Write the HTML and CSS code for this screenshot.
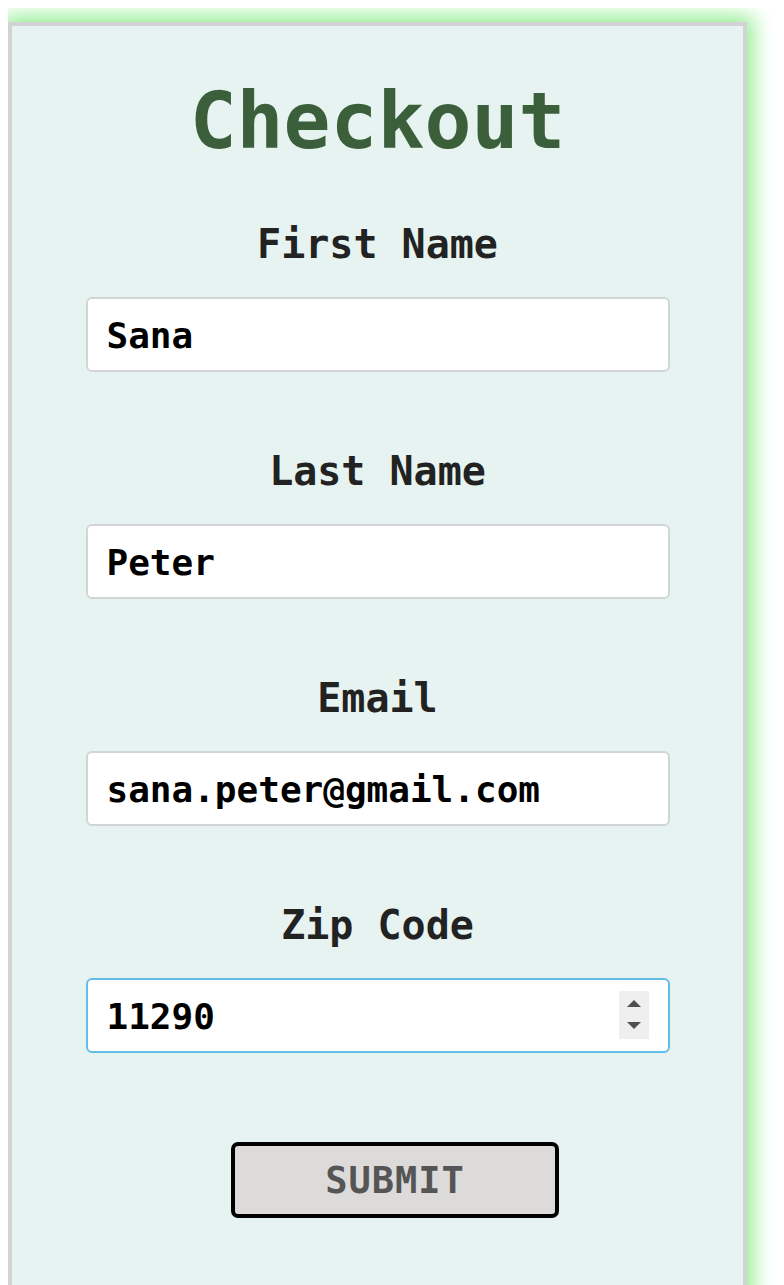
FILE: index.html
```html
<!DOCTYPE html>
<html lang="en">
<head>
<meta charset="utf-8">
<title>Checkout</title>
<link rel="stylesheet" href="styles.css">
</head>
<body>
<div class="card">
  <h1 class="title">Checkout</h1>
  <form class="form">
    <label class="field-label first" for="first">First Name</label>
    <input class="field" id="first" type="text" value="Sana">

    <label class="field-label" for="last">Last Name</label>
    <input class="field" id="last" type="text" value="Peter">

    <label class="field-label" for="email">Email</label>
    <input class="field" id="email" type="text" value="sana.peter@gmail.com">

    <label class="field-label" for="zip">Zip Code</label>
    <div class="field-wrap">
      <input class="field field-focus" id="zip" type="text" value="11290">
      <span class="spinner">
        <svg width="30" height="48" viewBox="0 0 30 48">
          <polygon points="8,16 22,16 15,9" fill="#505050"/>
          <polygon points="8,31 22,31 15,38" fill="#505050"/>
        </svg>
      </span>
    </div>

    <button class="submit" type="button">SUBMIT</button>
  </form>
</div>
</body>
</html>
```

FILE: styles.css
```css
html, body {
  background: #ffffff;
}

body {
  margin: 8px;
  font-family: "DejaVu Sans Mono", "Liberation Mono", monospace;
}

.card {
  box-sizing: border-box;
  width: 739px;
  margin-top: 14px;
  border: 4px solid #d3d3d3;
  background: #e6f3f0;
  box-shadow: 0 0 20px 6px #90ee90;
  padding: 56px 0 120px;
}

.title {
  margin: 0;
  text-align: center;
  font-size: 78px;
  line-height: 78px;
  font-weight: bold;
  color: #3b5f3b;
}

.form {
  display: flex;
  flex-direction: column;
  align-items: center;
  margin: 0;
}

.field-label {
  display: block;
  margin-top: 75px;
  margin-bottom: 29px;
  font-size: 40px;
  line-height: 48px;
  font-weight: bold;
  color: #222222;
  text-align: center;
}

.field-label.first {
  margin-top: 60px;
}

.field {
  box-sizing: border-box;
  width: 584px;
  height: 75px;
  padding: 2px 19px 0;
  border: 2px solid #d2d5d6;
  border-radius: 6px;
  background: #ffffff;
  font-family: "DejaVu Sans Mono", "Liberation Mono", monospace;
  font-size: 36px;
  font-weight: bold;
  color: #000000;
  outline: none;
}

.field-wrap {
  position: relative;
  width: 584px;
  height: 75px;
}

.field-focus {
  border-color: #62bde9;
}

.spinner {
  position: absolute;
  top: 13px;
  right: 21px;
  width: 30px;
  height: 48px;
  background: #efefef;
  display: block;
}

.spinner svg {
  display: block;
}

.submit {
  box-sizing: border-box;
  width: 328px;
  height: 76px;
  margin-top: 89px;
  margin-left: 35px;
  border: 4px solid #000000;
  border-radius: 7px;
  background: #dcdbda;
  font-family: "DejaVu Sans Mono", "Liberation Mono", monospace;
  font-size: 37px;
  font-weight: bold;
  letter-spacing: 1px;
  color: #555555;
  padding: 0;
}
```
